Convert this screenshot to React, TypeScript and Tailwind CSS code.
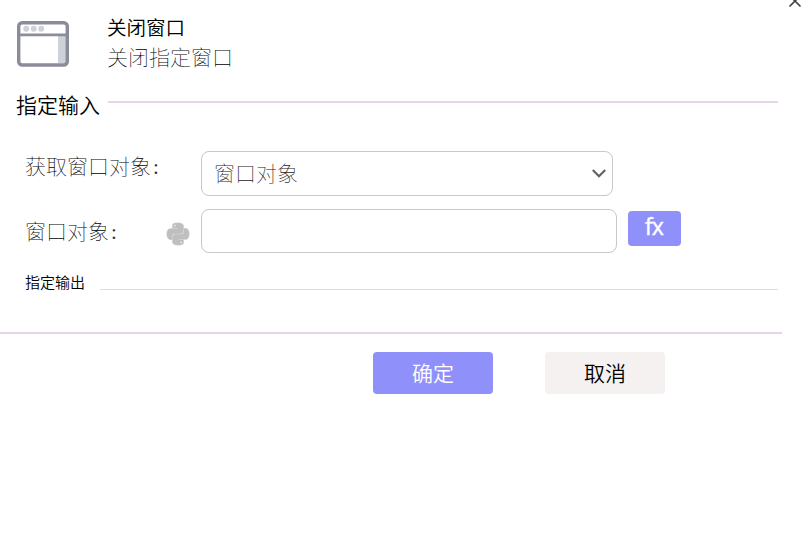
import { useState } from 'react';
import type { ReactNode } from 'react';
import { SiPython } from 'react-icons/si';

function WindowIcon() {
  return (
    <svg width="54" height="48" viewBox="0 0 54 48" fill="none">
      <path d="M42 15h8v28h-8z" fill="#ced1d8" />
      <rect x="2.7" y="2.8" width="48.6" height="42.2" rx="3.5" stroke="#8a8c9b" strokeWidth="3.4" />
      <path d="M3 14.8h48" stroke="#8a8c9b" strokeWidth="2.8" />
      <circle cx="10.200" cy="8.8" r="3" fill="#ced1d8" />
      <circle cx="17.7" cy="8.8" r="3" fill="#ced1d8" />
      <circle cx="25.200" cy="8.8" r="3" fill="#ced1d8" />
    </svg>
  );
}

function FieldRow({ label, extra, children }: { label: ReactNode; extra?: ReactNode; children: ReactNode }) {
  return (
    <div className="flex items-start pl-[25px]">
      <div className="flex w-[176px] shrink-0 items-start justify-between pr-[12px]">
        <label className="whitespace-nowrap text-[21px] font-thin leading-[32px] text-black">
          {label}<span className="ml-[2px] font-['Liberation_Serif',serif] text-[#333]">:</span>
        </label>
        {extra}
      </div>
      {children}
    </div>
  );
}

export default function App() {
  const [value, setValue] = useState('');

  return (
    <div className="h-[549px] w-[808px] overflow-hidden bg-white font-['Liberation_Sans','Noto_Sans_CJK_SC',sans-serif] text-black">
      <button aria-label="关闭" className="absolute top-[-6px] left-[788px]">
        <svg width="14" height="14" viewBox="0 0 14 14" stroke="#444" strokeWidth="1.7">
          <path d="M1.5 1.5l11 11M12.5 1.5l-11 11" />
        </svg>
      </button>

      <header className="flex h-[92px] pt-[14px] pl-4">
        <div className="w-[91px] pt-[6px]">
          <WindowIcon />
        </div>
        <div>
          <h1 className="text-[19.5px] font-[350] leading-[29px]">关闭窗口</h1>
          <p className="text-[21px] font-thin leading-[29px]">关闭指定窗口</p>
        </div>
      </header>

      <div className="flex h-[59px] pl-4">
        <h2 className="w-[92px] shrink-0 text-[21px] font-[350] leading-[27px]">指定输入</h2>
        <div className="mt-[9px] h-[2px] w-[670px] bg-[#e6d4e8]" />
      </div>

      <div className="h-[58px]">
        <FieldRow label="获取窗口对象">
          <button className="flex h-[45px] w-[412px] items-center justify-between rounded-[8px] border border-[#c8c8c8] pr-[5px] pl-[12px]">
            <span className="text-[21px] font-thin leading-[30px] text-[#222]">窗口对象</span>
            <svg width="16" height="10" viewBox="0 0 16 10" fill="none" stroke="#606060" strokeWidth="2.1">
              <path d="M1.8 1L8 7.200l6.200-6.200" />
            </svg>
          </button>
        </FieldRow>
      </div>

      <div className="h-[65px]">
        <FieldRow
          label={<span className="inline-block pt-[7px]">窗口对象</span>}
          extra={<SiPython size={22} className="mt-[14px] overflow-visible stroke-current [stroke-linejoin:round] [stroke-width:0.7] text-[#bfbfbf]" />}
        >
          <input
            value={value}
            onChange={e => setValue(e.target.value)}
            className="h-[44px] w-[416px] rounded-[8px] border border-[#c8c8c8] px-3 text-[21px] outline-none"
          />
          <button className="mt-[2px] ml-[11px] flex h-[35px] w-[53px] justify-center rounded-[4px] bg-[#9090fa] pr-px font-['Noto_Sans',sans-serif] text-[23px] leading-[30px] tracking-[-0.8px] text-white [-webkit-text-stroke:0.3px_white]">
            fx
          </button>
        </FieldRow>
      </div>

      <div className="flex h-[58px] pl-[25px]">
        <h2 className="w-[75px] shrink-0 text-[15px] font-[350] leading-[18px]">指定输出</h2>
        <div className="mt-[15px] h-px w-[678px] bg-[#e6d4e8]" />
      </div>

      <div className="h-[2px] w-[782px] bg-[#e6d4e8]" />

      <footer className="flex gap-[52px] pt-[18px] pl-[373px]">
        <button className="h-[42px] w-[120px] rounded-[4px] bg-[#9090fa] text-[21px] font-[350] leading-[43px] text-white">确定</button>
        <button className="h-[42px] w-[120px] rounded-[4px] bg-[#f5f1f1] text-[21px] font-[350] leading-[43px]">取消</button>
      </footer>
    </div>
  );
}
